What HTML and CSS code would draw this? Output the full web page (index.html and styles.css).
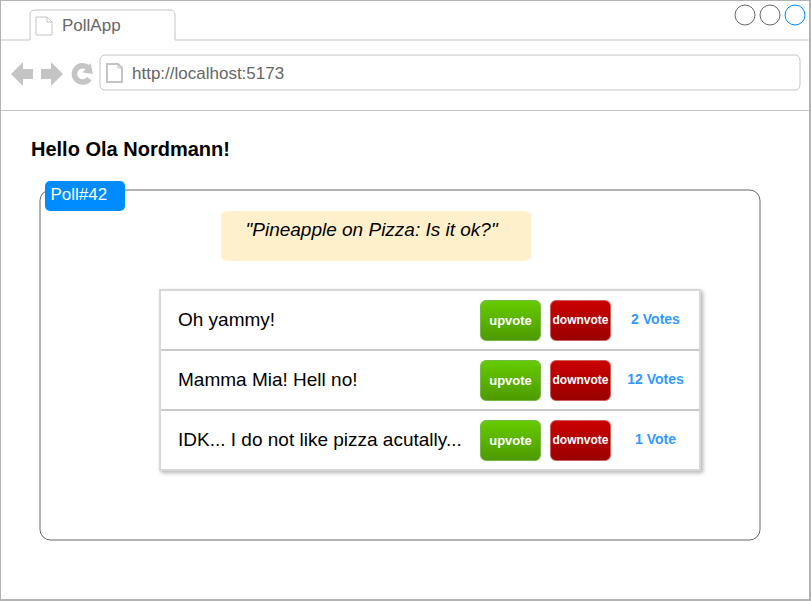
FILE: index.html
```html
<!DOCTYPE html>
<html lang="en">
<head>
<meta charset="utf-8">
<title>PollApp</title>
<link rel="stylesheet" href="styles.css">
</head>
<body>
<div class="window">
  <header class="tabs">
    <svg class="tab-shape" width="809" height="40" viewBox="1 1 809 40"><path d="M1 40H30V15Q30 10 35 10H170Q175 10 175 15V40H810" fill="none" stroke="#c4c4c4"/></svg>
    <div class="tab">
      <svg width="18" height="20" viewBox="0 0 18 20" fill="none" stroke="#c4c4c4"><path d="M1 1H12L17 6V19H1ZM12 1V6H17"/></svg>
      <span>PollApp</span>
    </div>
    <svg class="controls" width="72" height="24" viewBox="0 0 72 24" fill="none" stroke="#666"><circle cx="11" cy="12" r="10"/><circle cx="36" cy="12" r="10"/><circle cx="61" cy="12" r="10" stroke="#008cff"/></svg>
  </header>
  <nav class="toolbar">
    <svg class="nav-icons" width="84" height="26" viewBox="10 61 84 26"><path fill="#c4c4c4" d="M11 74L23 62V69H33V79H23V86ZM63 74L51 62V69H41V79H51V86Z"/><path fill="none" stroke="#c4c4c4" stroke-width="5.5" d="M89.3 78.6A8.2 8.2 0 1 1 87.5 67.3"/><path fill="#c4c4c4" d="M90.6 63L93 74L82.5 72.6Z"/></svg>
    <div class="address">
      <svg class="frame" width="702" height="37" viewBox="99 54 702 37"><rect x="100" y="55" width="700" height="35" rx="5" fill="none" stroke="#c4c4c4"/></svg>
      <svg class="page-icon" width="18" height="20" viewBox="0 0 18 20" fill="none" stroke="#c4c4c4" stroke-width="2"><path d="M1 1H12L16 5V19H1Z"/><path d="M12 1V5H16" stroke-width="1"/></svg>
      <span>http://localhost:5173</span>
    </div>
  </nav>
  <main>
    <h1>Hello Ola Nordmann!</h1>
    <section class="poll">
      <svg class="frame" width="722" height="352" viewBox="39 189 722 352"><rect x="40" y="190" width="720" height="350" rx="10.5" fill="none" stroke="#666"/></svg>
      <div class="badge">Poll#42</div>
      <div class="question"><span>"Pineapple on Pizza: Is it ok?"</span></div>
      <div class="options">
        <div class="option"><span class="label">Oh yammy!</span><button class="up">upvote</button><button class="down">downvote</button><span class="votes">2 Votes</span></div>
        <div class="option"><span class="label">Mamma Mia! Hell no!</span><button class="up">upvote</button><button class="down">downvote</button><span class="votes">12 Votes</span></div>
        <div class="option"><span class="label">IDK... I do not like pizza acutally...</span><button class="up">upvote</button><button class="down">downvote</button><span class="votes">1 Vote</span></div>
      </div>
    </section>
  </main>
</div>
</body>
</html>
```
FILE: styles.css
```css
* { box-sizing: border-box; }
body { margin: 0; background: #fff; font-family: "Liberation Sans", Arial, sans-serif; color: #000; }
svg { display: block; flex: none; }
.window { width: 811px; height: 601px; border: solid #b3b3b3; border-width: 1px 2px 2px 1px; overflow: hidden; }
.tabs { position: relative; display: flex; justify-content: space-between; height: 40px; padding: 2px 3px 0 34px; }
.tab-shape, .frame { position: absolute; left: 0; top: 0; }
.tab { display: flex; align-items: center; gap: 9px; height: 44px; padding-top: 2px; font-size: 17px; color: #666; }
.tab span { line-height: 20px; }
.toolbar { display: flex; height: 70px; padding: 13px 0 0 9px; border-bottom: 1px solid #c4c4c4; }
.nav-icons { margin-top: 7px; }
.address { position: relative; display: flex; align-items: center; gap: 8px; width: 702px; height: 37px; margin-left: 5px; padding-left: 7px; font-size: 17px; color: #666; }
.address span { padding-top: 2px; }
main { padding: 27px 0 0 30px; }
h1 { margin: 0; font-size: 20px; line-height: 23px; white-space: nowrap; }
.poll { position: relative; width: 722px; height: 352px; margin: 28px 0 0 8px; padding: 1px; }
.badge { position: absolute; left: 5.5px; top: -8.5px; width: 80px; height: 30px; padding: 0 6px; border-radius: 5px; background: #008cff; color: #fff; font-size: 17px; line-height: 28px; }
.question { width: 310px; height: 50px; margin: 20.5px 0 0 180.5px; padding-left: 25px; border-radius: 6px; background: #fff0cc; font-size: 19px; font-style: italic; line-height: 38px; white-space: nowrap; }
.options { width: 542px; height: 182px; margin: 28.5px 0 0 119px; border: 2px solid #d8d8d8; background: #fff; box-shadow: 2px 2px 4px rgba(0,0,0,.3); }
.option { display: flex; align-items: center; height: 60px; padding-left: 17px; border-bottom: 2px solid #cacaca; }
.option:last-child { height: 58px; border: 0; }
.label { width: 302px; font-size: 19px; white-space: nowrap; line-height: 58px; }
button { width: 61px; height: 41px; margin: 0 9px 0 0; padding: 0; border: 1px solid #75b944; border-radius: 6px; color: #fff; font: bold 13px/38px "Liberation Sans", Arial, sans-serif; white-space: nowrap; }
.up { padding-top: 1px; background: linear-gradient(#66cc00, #4d9900) border-box; }
.down { background: linear-gradient(#cc0000, #990000) border-box; border-color: #cc6060; font-size: 12px; }
.votes { width: 71px; padding-bottom: 2px; text-align: center; color: #3399ff; font-size: 14px; font-weight: bold; }
```
